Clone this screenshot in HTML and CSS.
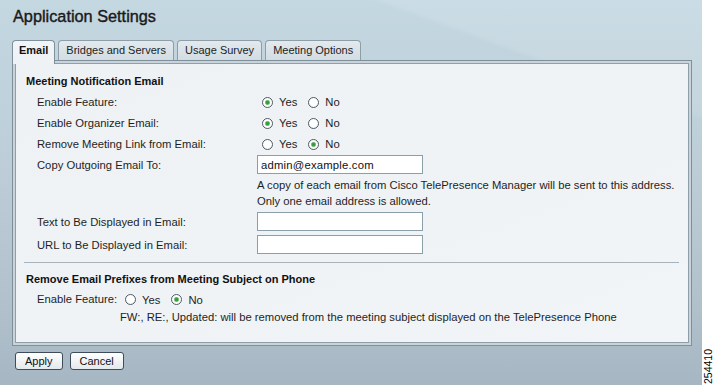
FILE: index.html
```html
<!DOCTYPE html>
<html>
<head>
<meta charset="utf-8">
<link rel="stylesheet" href="styles.css">
</head>
<body>
<div class="page">
  <div class="main">
    <h1 class="title">Application Settings</h1>
    <div class="tabs">
      <div class="tab active">Email</div>
      <div class="tab">Bridges and Servers</div>
      <div class="tab">Usage Survey</div>
      <div class="tab">Meeting Options</div>
    </div>
    <div class="panel">
      <div class="panel-inner">
        <div class="section-title">Meeting Notification Email</div>
        <div class="form">
          <div class="row">
            <div class="label">Enable Feature:</div>
            <div class="radios">
              <label class="opt"><input type="radio" name="f1" checked>Yes</label>
              <label class="opt"><input type="radio" name="f1">No</label>
            </div>
          </div>
          <div class="row">
            <div class="label">Enable Organizer Email:</div>
            <div class="radios">
              <label class="opt"><input type="radio" name="f2" checked>Yes</label>
              <label class="opt"><input type="radio" name="f2">No</label>
            </div>
          </div>
          <div class="row">
            <div class="label">Remove Meeting Link from Email:</div>
            <div class="radios">
              <label class="opt"><input type="radio" name="f3">Yes</label>
              <label class="opt"><input type="radio" name="f3" checked>No</label>
            </div>
          </div>
          <div class="row">
            <div class="label">Copy Outgoing Email To:</div>
            <input class="text" type="text" value="admin@example.com">
          </div>
          <div class="help">
            <div>A copy of each email from Cisco TelePresence Manager will be sent to this address.</div>
            <div>Only one email address is allowed.</div>
          </div>
          <div class="row spaced">
            <div class="label">Text to Be Displayed in Email:</div>
            <input class="text" type="text" value="">
          </div>
          <div class="row spaced">
            <div class="label">URL to Be Displayed in Email:</div>
            <input class="text" type="text" value="">
          </div>
        </div>
        <div class="sep"></div>
        <div class="section-title second">Remove Email Prefixes from Meeting Subject on Phone</div>
        <div class="form">
          <div class="row">
            <div class="label-inline">Enable Feature:</div>
            <div class="radios inline">
              <label class="opt"><input type="radio" name="f4">Yes</label>
              <label class="opt"><input type="radio" name="f4" checked>No</label>
            </div>
          </div>
        </div>
        <div class="note">FW:, RE:, Updated: will be removed from the meeting subject displayed on the TelePresence Phone</div>
      </div>
    </div>
    <div class="actions">
      <button class="btn" type="button">Apply</button>
      <button class="btn" type="button">Cancel</button>
    </div>
  </div>
  <div class="strip"><span class="figno">254410</span></div>
</div>
</body>
</html>
```
FILE: styles.css
```css
html, body {
  margin: 0;
  padding: 0;
}
body {
  font-family: "Liberation Sans", Arial, sans-serif;
  font-size: 11.25px;
  color: #1e1e1e;
}
.page {
  display: flex;
  width: 715px;
  height: 385px;
  overflow: hidden;
}
.main {
  width: 702px;
  height: 385px;
  box-sizing: border-box;
  padding: 6px 10px 0 12px;
  background:
    linear-gradient(200deg, rgba(255,255,255,0.10) 0%, rgba(255,255,255,0.10) 18%, rgba(255,255,255,0) 19%),
    linear-gradient(to bottom, #c4d8e2 0%, #bccdd7 45%, #b0c1cc 80%, #a6b7c3 100%);
}
.title {
  margin: 0 0 14px 1px;
  font-size: 16.3px;
  line-height: 20px;
  font-weight: normal;
  color: #1a1a1a;
  -webkit-text-stroke: 0.4px #1a1a1a;
}
.tabs {
  display: flex;
  align-items: flex-end;
  gap: 3px;
  height: 20px;
  position: relative;
  z-index: 1;
  font-size: 11px;
}
.tab {
  height: 19px;
  line-height: 18px;
  padding: 0 7px;
  border: 1px solid #8d9ea9;
  border-bottom: none;
  border-radius: 4px 4px 0 0;
  background: linear-gradient(to bottom, #e3eaee, #d2dce2);
  color: #222;
}
.tab.active {
  height: 23px;
  margin-bottom: -4px;
  line-height: 19px;
  padding: 0 6px;
  font-weight: bold;
  border-color: #7d909c;
  background: linear-gradient(to bottom, #f2f5f7, #eef2f5);
  color: #111;
}
.panel {
  display: flex;
  width: 680px;
  height: 286px;
  box-sizing: border-box;
  border: 1px solid #7d909c;
  padding: 2px;
  background: #c9d3d9;
}
.panel-inner {
  flex: 1;
  border: 1px solid #8e9fa9;
  padding-top: 10px;
  background: linear-gradient(160deg, #eef2f5 0%, #eff3f5 60%, #f2f5f7 100%);
}
.section-title {
  margin-left: 10px;
  line-height: 14px;
  font-weight: bold;
  font-size: 11px;
  color: #111;
  margin-bottom: 3px;
}
.section-title.second {
  margin-top: 9px;
  margin-bottom: 2px;
}
.form {
  padding-left: 21px;
}
.row {
  display: flex;
  align-items: center;
  height: 21px;
}
.row.spaced {
  margin-top: 2px;
}
.label {
  width: 220px;
  flex: none;
}
.label-inline {
  margin-right: 8px;
}
.radios {
  display: flex;
  align-items: center;
  gap: 11px;
  padding-left: 5px;
  padding-top: 1px;
}
.radios.inline {
  padding-left: 0;
  padding-top: 2px;
}
.opt {
  display: flex;
  align-items: center;
}
.opt input {
  -webkit-appearance: none;
  appearance: none;
  width: 11px;
  height: 11px;
  margin: 0 6px 0 0;
  box-sizing: border-box;
  border: 1px solid #4f5a62;
  border-radius: 50%;
  background: radial-gradient(circle at 50% 40%, #ffffff 0%, #ffffff 55%, #e6eaec 100%);
}
.opt input:checked {
  background: radial-gradient(circle, #2f9a3a 0, #3aa444 1.6px, #9fd2a3 2.4px, #ffffff 3px, #ffffff 100%);
}
.text {
  width: 166px;
  height: 19px;
  box-sizing: border-box;
  margin: 0;
  padding: 0 3px;
  border: 1px solid #8a9eac;
  background: #fff;
  font-family: "Liberation Sans", Arial, sans-serif;
  font-size: 11.3px;
  letter-spacing: 0.2px;
  color: #111;
}
.help {
  margin-top: 2px;
  padding-left: 220px;
  line-height: 16px;
}
.sep {
  height: 1px;
  margin: 7px 9px 0 8px;
  background: #a7b4bd;
}
.note {
  padding-left: 104px;
  line-height: 16px;
}
.actions {
  display: flex;
  gap: 7px;
  margin-top: 6px;
  padding-left: 3px;
}
.btn {
  height: 18px;
  margin: 0;
  padding: 0 9px;
  border: 1px solid #3f4d5b;
  border-radius: 3px;
  background: linear-gradient(to bottom, #ffffff, #e4e9ec);
  font-family: "Liberation Sans", Arial, sans-serif;
  font-size: 11px;
  line-height: 16px;
  color: #111;
}
.strip {
  width: 13px;
  height: 385px;
  background: #fff;
  display: flex;
  flex-direction: column;
  justify-content: flex-end;
  align-items: center;
  padding-bottom: 1px;
  box-sizing: border-box;
}
.figno {
  writing-mode: vertical-rl;
  transform: rotate(180deg);
  font-size: 10.5px;
  line-height: 11px;
  color: #000;
}
```
